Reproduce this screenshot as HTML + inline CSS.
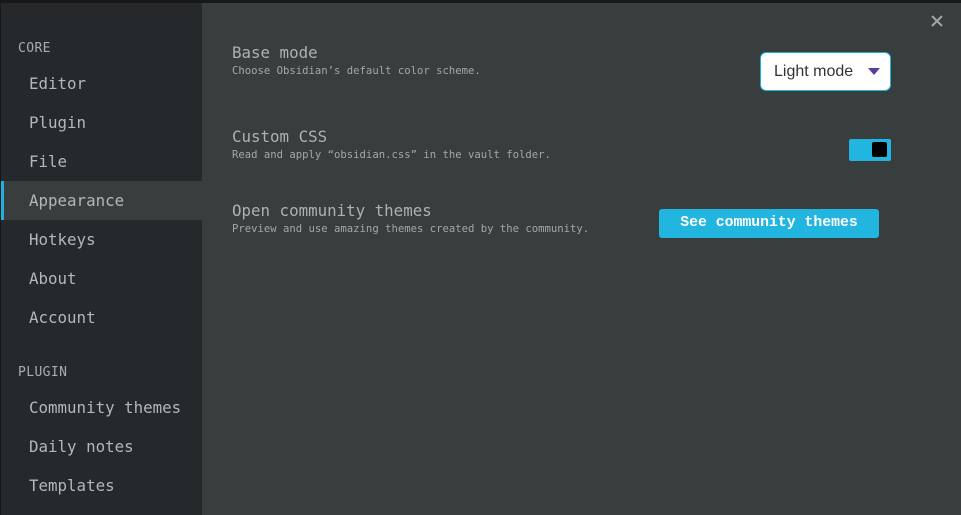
<!DOCTYPE html>
<html><head><style>
*{margin:0;padding:0;box-sizing:border-box}
body{width:961px;height:515px;overflow:hidden;background:#161819;position:relative;font-family:"DejaVu Sans Mono","Liberation Mono",monospace}
.side{position:absolute;left:1px;top:3px;width:201px;height:512px;background:#26292c}
.main{position:absolute;left:202px;top:3px;right:0;height:512px;background:#383d3e}
.h{position:absolute;left:18px;font-size:13px;color:#a9acae;letter-spacing:.4px}
.it{position:absolute;left:1px;width:201px;height:39px;line-height:39px;padding-left:28px;font-size:15.8px;color:#b4b7b9}
.act{background:#383d3e;border-left:3px solid #1fb0dd;padding-left:25px}
.t{position:absolute;left:232px;font-size:15.8px;color:#aeb1b2}
.d{position:absolute;left:232px;font-size:10.6px;color:#a4a7a8}
</style></head><body>
<div class="side"></div>
<div class="main"></div>
<div class="h" style="top:41px">CORE</div>
<div class="it" style="top:64px">Editor</div>
<div class="it" style="top:103px">Plugin</div>
<div class="it" style="top:142px">File</div>
<div class="it act" style="top:181px">Appearance</div>
<div class="it" style="top:220px">Hotkeys</div>
<div class="it" style="top:259px">About</div>
<div class="it" style="top:298px">Account</div>
<div class="h" style="top:365px">PLUGIN</div>
<div class="it" style="top:388px">Community themes</div>
<div class="it" style="top:427px">Daily notes</div>
<div class="it" style="top:466px">Templates</div>

<div class="t" style="top:43px">Base mode</div>
<div class="d" style="top:65px">Choose Obsidian’s default color scheme.</div>
<div class="t" style="top:127px">Custom CSS</div>
<div class="d" style="top:149px">Read and apply “obsidian.css” in the vault folder.</div>
<div class="t" style="top:201px">Open community themes</div>
<div class="d" style="top:223px">Preview and use amazing themes created by the community.</div>

<div style="position:absolute;left:760px;top:52px;width:131px;height:39px;background:#fff;border:1px solid #1fb0dd;border-radius:6px;font-family:'Liberation Sans',sans-serif;font-size:16px;color:#333;line-height:37px;padding-left:13px">Light mode<span style="position:absolute;left:107px;top:15px;width:0;height:0;border-left:6px solid transparent;border-right:6px solid transparent;border-top:7px solid #5a3e9a"></span></div>

<div style="position:absolute;left:849px;top:139px;width:42px;height:22px;background:#21b5e0;border-radius:2px"><div style="position:absolute;right:4px;top:3px;width:15px;height:15px;background:#000;border-radius:2px"></div></div>

<div style="position:absolute;left:659px;top:209px;width:220px;height:29px;background:#21b5e0;border-radius:3px;color:#fff;font-family:'Liberation Mono','Courier New',monospace;font-weight:bold;font-size:14.8px;line-height:29px;text-align:center">See community themes</div>

<svg style="position:absolute;left:929px;top:13px" width="16" height="16" viewBox="0 0 16 16"><path d="M3 3L13 13M13 3L3 13" stroke="#a2a5a6" stroke-width="2"/></svg>
</body></html>
